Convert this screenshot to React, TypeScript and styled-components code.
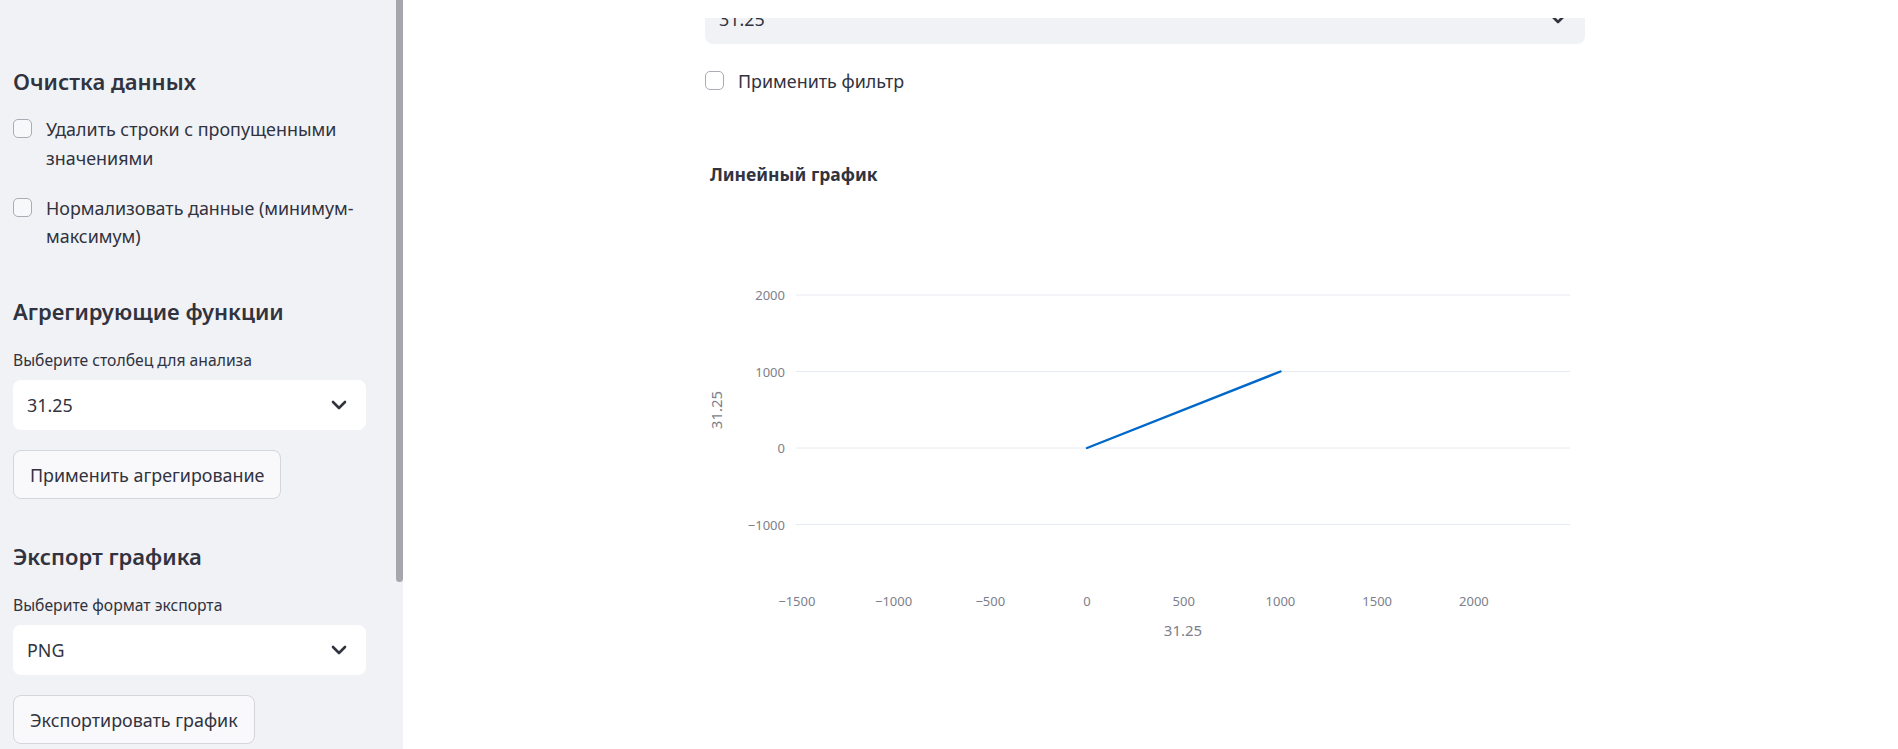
import React from "react";
import styled, { createGlobalStyle } from "styled-components";

const FONT = `"Noto Sans", "Open Sans", "DejaVu Sans", sans-serif`;
const TEXT = "#31333f";
const AXIS = "#7d808c";

const GlobalStyle = createGlobalStyle`
  html, body { margin: 0; padding: 0; height: 100%; overflow: hidden; }
  body { font-family: ${FONT}; color: ${TEXT}; background: #fff; }
  * { box-sizing: border-box; }
`;

const Shell = styled.div`
  display: flex;
  width: 1898px;
  height: 749px;
  overflow: hidden;
`;

const Sidebar = styled.aside`
  position: relative;
  flex: 0 0 403px;
  height: 100%;
  background: #f0f2f6;
  padding: 63px 37px 0 13px;
  display: flex;
  flex-direction: column;
  overflow: hidden;
`;

const ScrollThumb = styled.div`
  position: absolute;
  top: 0;
  right: 0;
  width: 7px;
  height: 582px;
  background: #a5a6ae;
  border-radius: 0 0 4px 4px;
`;

const SectionTitle = styled.h2<{ $gap?: number }>`
  margin: ${(p) => p.$gap ?? 0}px 0 0;
  font-size: 22px;
  font-weight: 600;
  line-height: 36px;
  color: ${TEXT};
`;

const CheckRow = styled.label<{ $gap: number }>`
  display: flex;
  align-items: flex-start;
  gap: 14px;
  margin-top: ${(p) => p.$gap}px;
  font-size: 17.9px;
  line-height: 28.8px;
  color: ${TEXT};
`;

const Box = styled.span<{ $bg: string }>`
  flex: 0 0 19px;
  width: 19px;
  height: 19px;
  margin-top: 4px;
  border: 1px solid #a9acb6;
  border-radius: 5px;
  background: ${(p) => p.$bg};
`;

const FieldLabel = styled.div<{ $gap: number }>`
  margin-top: ${(p) => p.$gap}px;
  font-size: 15.7px;
  line-height: 24px;
  color: ${TEXT};
`;

const SelectBox = styled.div<{ $bg: string; $gap: number }>`
  display: flex;
  align-items: center;
  justify-content: space-between;
  flex: 0 0 50px;
  height: 50px;
  margin-top: ${(p) => p.$gap}px;
  padding: 0 19px 0 14px;
  background: ${(p) => p.$bg};
  border-radius: 8px;
  font-size: 17.9px;
  color: ${TEXT};
`;

const ActionButton = styled.button<{ $gap: number }>`
  align-self: flex-start;
  flex: 0 0 49px;
  height: 49px;
  margin-top: ${(p) => p.$gap}px;
  padding: 0 16px;
  border: 1px solid #d5d6db;
  border-radius: 8px;
  background: #f9f9fb;
  font-family: ${FONT};
  font-size: 17.9px;
  color: ${TEXT};
`;

const Main = styled.main`
  position: relative;
  flex: 1;
  height: 100%;
  background: #fff;
  display: flex;
  justify-content: center;
  padding-right: 11px;
  overflow: hidden;
`;

const HeaderMask = styled.div`
  position: absolute;
  top: 0;
  left: 0;
  right: 0;
  height: 18px;
  background: #fff;
  z-index: 2;
`;

const Column = styled.div`
  width: 880px;
  margin-top: -6px;
  display: flex;
  flex-direction: column;
`;

const ChartTitle = styled.div`
  margin: 66px 0 0 5px;
  font-size: 17.5px;
  font-weight: 700;
  line-height: 24px;
  color: ${TEXT};
`;

const ChartSvg = styled.svg`
  display: block;
  margin-top: 15px;
  font-family: ${FONT};
`;

const Chevron = () => (
  <svg width="16" height="10" viewBox="0 0 16 10">
    <path d="M2 2 L8 8 L14 2" fill="none" stroke={TEXT} strokeWidth="2.6" strokeLinecap="round" strokeLinejoin="round" />
  </svg>
);

const xTicks = [-1500, -1000, -500, 0, 500, 1000, 1500, 2000];
const yTicks = [2000, 1000, 0, -1000];
const xPos = (v: number) => 382 + v * 0.19345;
const yPos = (v: number) => 247 - v * 0.0765;

const fmt = (v: number) => (v < 0 ? `\u2212${Math.abs(v)}` : `${v}`);

const LineChart = () => (
  <ChartSvg width={880} height={460} viewBox="0 0 880 460">
    {yTicks.map((t) => (
      <g key={t}>
        <line x1={91} x2={865} y1={yPos(t)} y2={yPos(t)} stroke="#e6eaf1" strokeWidth={1} />
        <text x={80} y={yPos(t) + 5} textAnchor="end" fontSize={13} fill={AXIS}>
          {fmt(t)}
        </text>
      </g>
    ))}
    {xTicks.map((t) => (
      <text key={t} x={xPos(t)} y={405} textAnchor="middle" fontSize={13} fill={AXIS}>
        {fmt(t)}
      </text>
    ))}
    <text x={478} y={435} textAnchor="middle" fontSize={15} fill={AXIS}>
      31.25
    </text>
    <text x={17} y={209} textAnchor="middle" fontSize={15} fill={AXIS} transform="rotate(-90 17 209)">
      31.25
    </text>
    <line x1={xPos(0)} y1={yPos(0)} x2={xPos(1000)} y2={yPos(1000)} stroke="#0068c9" strokeWidth={2.4} strokeLinecap="round" />
  </ChartSvg>
);

export default function App() {
  return (
    <>
      <GlobalStyle />
      <Shell>
        <Sidebar>
          <SectionTitle>Очистка данных</SectionTitle>
          <CheckRow $gap={16}>
            <Box $bg="#f7f8fa" />
            <span>Удалить строки с пропущенными значениями</span>
          </CheckRow>
          <CheckRow $gap={21}>
            <Box $bg="#f7f8fa" />
            <span>Нормализовать данные (минимум-максимум)</span>
          </CheckRow>
          <SectionTitle $gap={42}>Агрегирующие функции</SectionTitle>
          <FieldLabel $gap={19}>Выберите столбец для анализа</FieldLabel>
          <SelectBox $bg="#ffffff" $gap={8}>
            <span>31.25</span>
            <Chevron />
          </SelectBox>
          <ActionButton $gap={20}>Применить агрегирование</ActionButton>
          <SectionTitle $gap={39}>Экспорт графика</SectionTitle>
          <FieldLabel $gap={19}>Выберите формат экспорта</FieldLabel>
          <SelectBox $bg="#ffffff" $gap={8}>
            <span>PNG</span>
            <Chevron />
          </SelectBox>
          <ActionButton $gap={20}>Экспортировать график</ActionButton>
          <ScrollThumb />
        </Sidebar>
        <Main>
          <HeaderMask />
          <Column>
            <SelectBox $bg="#f0f2f6" $gap={0}>
              <span>31.25</span>
              <Chevron />
            </SelectBox>
            <CheckRow $gap={23}>
              <Box $bg="#ffffff" />
              <span>Применить фильтр</span>
            </CheckRow>
            <ChartTitle>Линейный график</ChartTitle>
            <LineChart />
          </Column>
        </Main>
      </Shell>
    </>
  );
}
